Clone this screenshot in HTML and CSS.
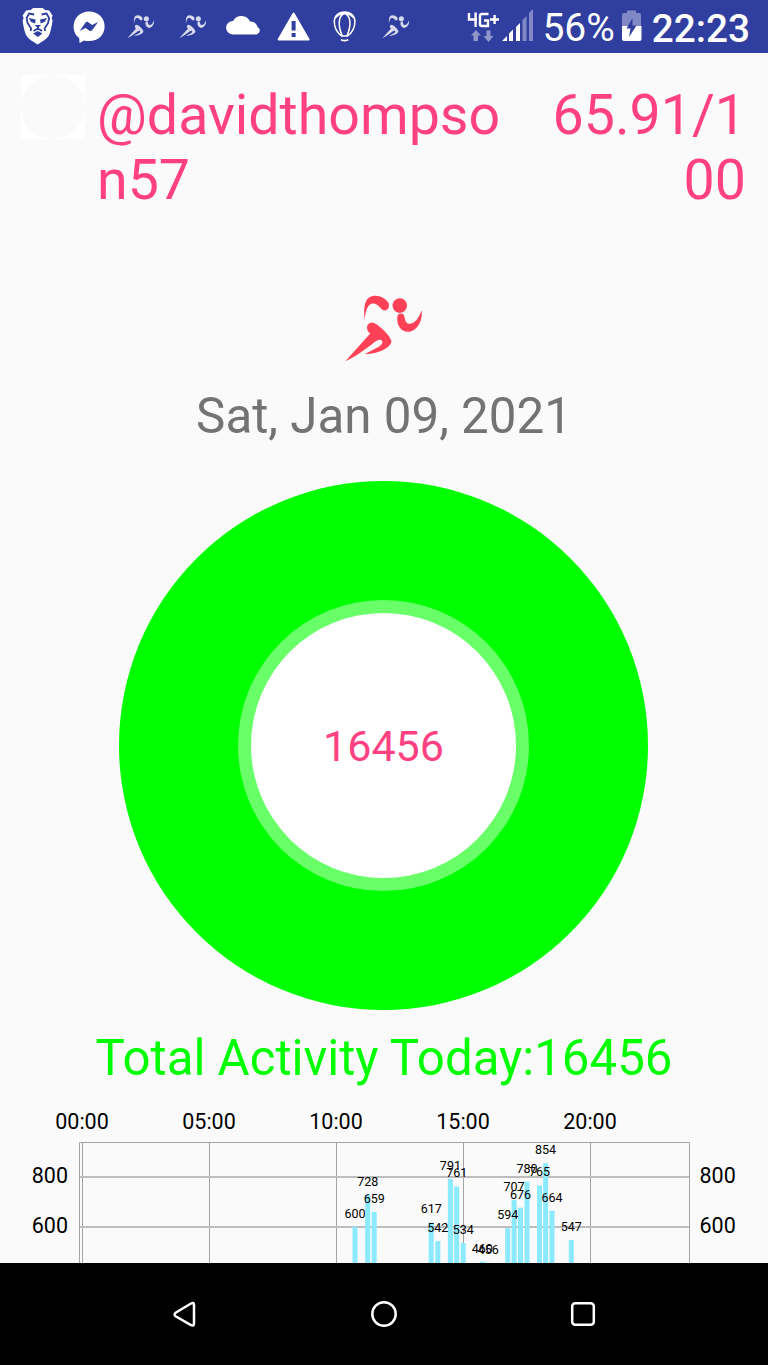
FILE: index.html
```
<!DOCTYPE html>
<html lang="en">
  <head>
    <meta charset="UTF-8" />
    <meta name="viewport" content="width=device-width" />
    <title>Activity</title>
    <link rel="stylesheet" href="styles.css">
  </head>

  <body>
    <svg class="defs" width="0" height="0">
      <symbol id="runner" viewBox="45 45 235 202">
        <path d="M104 120C99 72 108 48 134 47c18-1 33 9 42 21 5 13-3 26-15 23-9-2-15-20-31-20-17 0-23 22-26 49z" />
        <circle cx="210" cy="77" r="22" />
        <path d="M203 108c4-9 17-10 20-1 3 11 4 24 15 25 17 0 30-18 38-41 4 31-14 64-40 65-25 0-37-25-33-48z" />
        <path d="M46 245 121 161c-15-10-12-32 5-33 15 0 56 39 59 56 0 17-33 38-80 40 10-9 50-22 53-36-3-14-17-7-30 4C101 212 80 229 46 245z" />
      </symbol>
    </svg>

    <header class="status-bar">
      <div class="notifications">
        <svg viewBox="0 0 51 53">
          <path fill="#fff" d="M18.500 10 21 8h9.500l2.500 2 4 .5 3.500 5-1 2.500 1 2.500c-1 7-2 11-3.500 14.500-2 4-7 6.500-11.500 9.500-4.500-3-9.500-5.500-11.500-9.500-1.500-3.500-2.500-7.500-3.500-14.500l1-2.500-1-2.500 3.500-5z" />
          <path fill="none" stroke="#303f9f" stroke-width="1.800" stroke-linejoin="round" d="M22 14.500 17 13.500 14.500 18 15.500 23 19 28.500 18.500 31M29.500 14.500 34.500 13.500 37 18 36 23 32.500 28.500 33 31M21.500 31 25.700 28.500 30 31M25.700 25.500v3" />
          <path fill="#303f9f" d="M16.500 18l7 1.500-.5 4-4-1.500zM35 18l-7 1.500.5 4 4-1.500zM22.500 25h6.500l-3.200 3zM21 33.500l4.700-2.500 4.700 2.500-4.700 3.500z" />
        </svg>
        <svg viewBox="0 0 51 53">
          <path fill="#fff" d="M26 11.500c9 0 15.500 6.500 15.500 15S35 41 26 41c-2 0-4 0-5-.5L16.500 43l-.4-5C12 35 10.500 31 10.500 26.500c0-8.500 6.500-15 15.500-15z" />
          <path fill="#303f9f" d="M16.500 31l6-8.500c1-1 2-1 3 0l3.500 2.500 6-3-6 8.300c-1 1-2 1-3 .2L22.500 28z" />
        </svg>
        <svg class="run" viewBox="0 0 51 53"><use href="#runner" x="13" y="15" width="27.500" height="23.500" /></svg>
        <svg class="run" viewBox="0 0 51 53"><use href="#runner" x="13" y="15" width="27.500" height="23.500" /></svg>
        <svg viewBox="0 0 51 53">
          <path fill="#fff" d="M15.500 34.500a6.700 6.700 0 0 1 .5-13.500A9.500 9.500 0 0 1 33 21.500a6.500 6.500 0 0 1 5 1.500q2 2 2.500 4a4 4 0 0 1-1 7.500z" />
        </svg>
        <svg viewBox="0 0 51 53">
          <path fill="#fff" stroke="#fff" stroke-width="2" stroke-linejoin="round" d="M25.500 13.500 10.500 39.500h30z" />
          <path fill="#303f9f" d="M23.500 21h4v9.500h-4zM23.500 33h4v4h-4z" />
        </svg>
        <svg viewBox="0 0 51 53">
          <path fill="none" stroke="#fff" stroke-width="1.500" d="M25.500 12C19 12 15.200 16 15.200 21.500c0 6 3.300 11.500 7.300 14.500h6c4-3 7.300-8.500 7.300-14.500C35.800 16 32 12 25.500 12zM23 35.500C18 24 20 15 25.500 13.500 31 15 33 24 28 35.500M16 18q5-5 9.500-4.500Q30 13 35 18" />
          <path fill="none" stroke="#fff" stroke-width="1.800" stroke-linecap="round" d="M22.500 40q3 1.200 6 0" />
        </svg>
        <svg class="run" viewBox="0 0 51 53"><use href="#runner" x="12" y="15" width="27.500" height="23.500" /></svg>
      </div>
      <div class="system">
        <svg class="network" viewBox="0 0 34 53">
          <path fill="none" stroke="#fff" stroke-width="2.400" d="M2 13v6.500h8M8.600 12.500V27M21.500 14H15q-2 0-2 2v8q0 2 2 2h6v-5.500h-4M23 19.500h9M27.600 15v9" />
          <path fill="#8f97cb" d="M9 30l5 5.500h-3V41H6.500v-5.500H4zM21.500 42l-5-6h3v-5.500h4V36h3z" />
        </svg>
        <svg class="signal" viewBox="0 0 32 53">
          <path fill="#fff" d="M0 41l5-5v5zM7 41V33.500l4-4V41zM14 41V27l4-4v18z" />
          <path fill="#8089c5" d="M20.500 41V20l4-4v25zM27 41V13l4-4v32z" />
        </svg>
        <span class="percent">56%</span>
        <svg class="battery" viewBox="0 0 22 53">
          <path fill="#8089c5" d="M1 26V15q0-2 2-2h3v-2.500h9V13h3q2 0 2 2v11z" />
          <path fill="#fff" d="M1 26h19.500v13q0 2-2 2H3q-2 0-2-2z" />
          <path fill="#303f9f" d="M11.500 18 5.500 28.500h4L8 37l7.500-11.500h-4z" />
        </svg>
        <span class="clock">22:23</span>
      </div>
    </header>

    <main class="screen">
      <section class="account">
        <div class="avatar"><div class="avatar-circle"></div></div>
        <div class="user">@davidthompson57</div>
        <div class="score">65.91/100</div>
      </section>

      <svg class="logo"><use href="#runner" /></svg>
      <div class="date">Sat, Jan 09, 2021</div>

      <div class="donut">
        <div class="donut-ring">
          <div class="donut-hole">16456</div>
        </div>
      </div>

      <div class="total">Total Activity Today:16456</div>

      <svg class="chart" width="768" height="166" viewBox="0 1097 768 166">
        <g class="grid">
          <path d="M79.500 1263V1142.500H689.500V1263M82.500 1143V1263M209.500 1143V1263M336.500 1143V1263M463.500 1143V1263M590.500 1143V1263" />
          <path d="M80 1177H689M80 1227H689" />
        </g>
        <g class="axis hours">
          <text x="82" y="1128.500">00:00</text>
          <text x="209" y="1128.500">05:00</text>
          <text x="336" y="1128.500">10:00</text>
          <text x="463" y="1128.500">15:00</text>
          <text x="590" y="1128.500">20:00</text>
        </g>
        <g class="axis left">
          <text x="68" y="1183.300">800</text>
          <text x="68" y="1233.300">600</text>
        </g>
        <g class="axis">
          <text x="699.500" y="1183.300">800</text>
          <text x="699.500" y="1233.300">600</text>
        </g>
        <g id="bars"></g>
        <g id="values"></g>
      </svg>
    </main>

    <nav class="nav-bar">
      <svg viewBox="0 0 30 30"><path d="M24 5.500v19q0 3-3 1.700L6 17.500q-3-2 0-4l15-9q3-1.500 3 1z" /></svg>
      <svg viewBox="0 0 30 30"><circle cx="15" cy="15" r="11.700" /></svg>
      <svg viewBox="0 0 30 30"><rect x="4.200" y="4.200" width="21.600" height="21.600" rx="3" /></svg>
    </nav>

    <script>
      // [center x, steps]
      var data = [
        [355, 600], [367.7, 728], [374.2, 659], [431.2, 617], [437.8, 542],
        [450.4, 791], [456.7, 761], [463.2, 534], [482.3, 460], [488.3, 456],
        [507.7, 594], [514.1, 707], [520.5, 676], [527, 780],
        [539.5, 765], [545.6, 854], [552, 664], [571.3, 547]
      ];
      var bars = "";
      var values = "";

      data.forEach(function(d) {
        var top = 1376.7 - d[1] * 0.25;
        bars += '<rect x="' + (d[0] - 2.5) + '" y="' + top + '" width="5" height="130" />';
        values += '<text x="' + d[0] + '" y="' + (top - 9) + '">' + d[1] + "</text>";
      });

      document.getElementById("bars").innerHTML = bars;
      document.getElementById("values").innerHTML = values;
    </script>
  </body>
</html>
```
FILE: styles.css
```
* {
  margin: 0;
  padding: 0;
  box-sizing: border-box;
}

body {
  width: 768px;
  height: 1365px;
  display: flex;
  flex-direction: column;
  overflow: hidden;
  background: #fafafa;
  font-family: Roboto, sans-serif;
}

.defs {
  display: none;
}

.status-bar {
  flex: none;
  height: 53px;
  display: flex;
  justify-content: space-between;
  padding: 0 18px 0 12px;
  background: #303f9f;
  color: #fff;
}

.notifications,
.system {
  display: flex;
  align-items: center;
}

.notifications svg {
  width: 51.2px;
  height: 53px;
}

.run {
  fill: #d6d9ec;
}

.network {
  width: 34px;
  height: 53px;
}

.signal {
  width: 32px;
  height: 53px;
  margin-left: 1px;
}

.percent {
  padding-top: 3px;
  margin-left: 8px;
  font-size: 39px;
}

.battery {
  width: 22px;
  height: 53px;
  margin: 0 9px 0 6px;
}

.clock {
  padding-top: 3px;
  font-size: 38.700px;
  font-weight: 500;
}

.screen {
  height: 1210px;
  display: flex;
  flex-direction: column;
  align-items: center;
  overflow: hidden;
}

.account {
  width: 100%;
  height: 242px;
  display: flex;
  align-items: flex-start;
  padding: 30px 22px 0 21px;
  color: #ff4081;
  font-size: 55.500px;
  line-height: 65px;
}

.avatar {
  width: 64px;
  height: 64px;
  margin-top: -8px;
  background: #fff;
}

.avatar-circle {
  height: 64px;
  border-radius: 50%;
  background: #fafafa;
}

.user {
  width: 427px;
  margin-left: 12px;
  word-break: break-all;
}

.score {
  flex: 1;
  padding-left: 18px;
  text-align: right;
  word-break: break-all;
}

.logo {
  flex: none;
  width: 78px;
  height: 67px;
  fill: #ff4158;
}

.date {
  margin-top: 25px;
  color: #737373;
  font-size: 49.300px;
  line-height: 58px;
}

.donut {
  flex: none;
  width: 529px;
  height: 529px;
  display: flex;
  margin-top: 35.500px;
  margin-right: 1px;
  border-radius: 50%;
  background: #0f0;
}

.donut-ring {
  width: 291px;
  height: 291px;
  display: flex;
  margin: auto;
  border-radius: 50%;
  background: #69ff69;
}

.donut-hole {
  width: 265px;
  height: 265px;
  margin: auto;
  border-radius: 50%;
  background: #fff;
  color: #ff4081;
  font-size: 43px;
  line-height: 266px;
  text-align: center;
}

.total {
  margin-top: 19.500px;
  color: #0f0;
  font-size: 49.200px;
  line-height: 58px;
}

.chart {
  flex: none;
  margin-top: 10px;
}

.grid path {
  fill: none;
  stroke: #a3a3a3;
}

.grid path + path {
  stroke: #bdbdbd;
  stroke-width: 2;
}

.axis {
  font-size: 21.500px;
}

.hours,
#values {
  text-anchor: middle;
}

.left {
  text-anchor: end;
}

#bars {
  fill: #8ceaff;
}

#values {
  font-size: 12.500px;
}

.nav-bar {
  flex: none;
  height: 102px;
  display: flex;
  align-items: center;
  justify-content: center;
  gap: 169px;
  background: #000;
}

.nav-bar svg {
  width: 30px;
  height: 30px;
  fill: none;
  stroke: #fff;
  stroke-width: 2.500;
}
```
